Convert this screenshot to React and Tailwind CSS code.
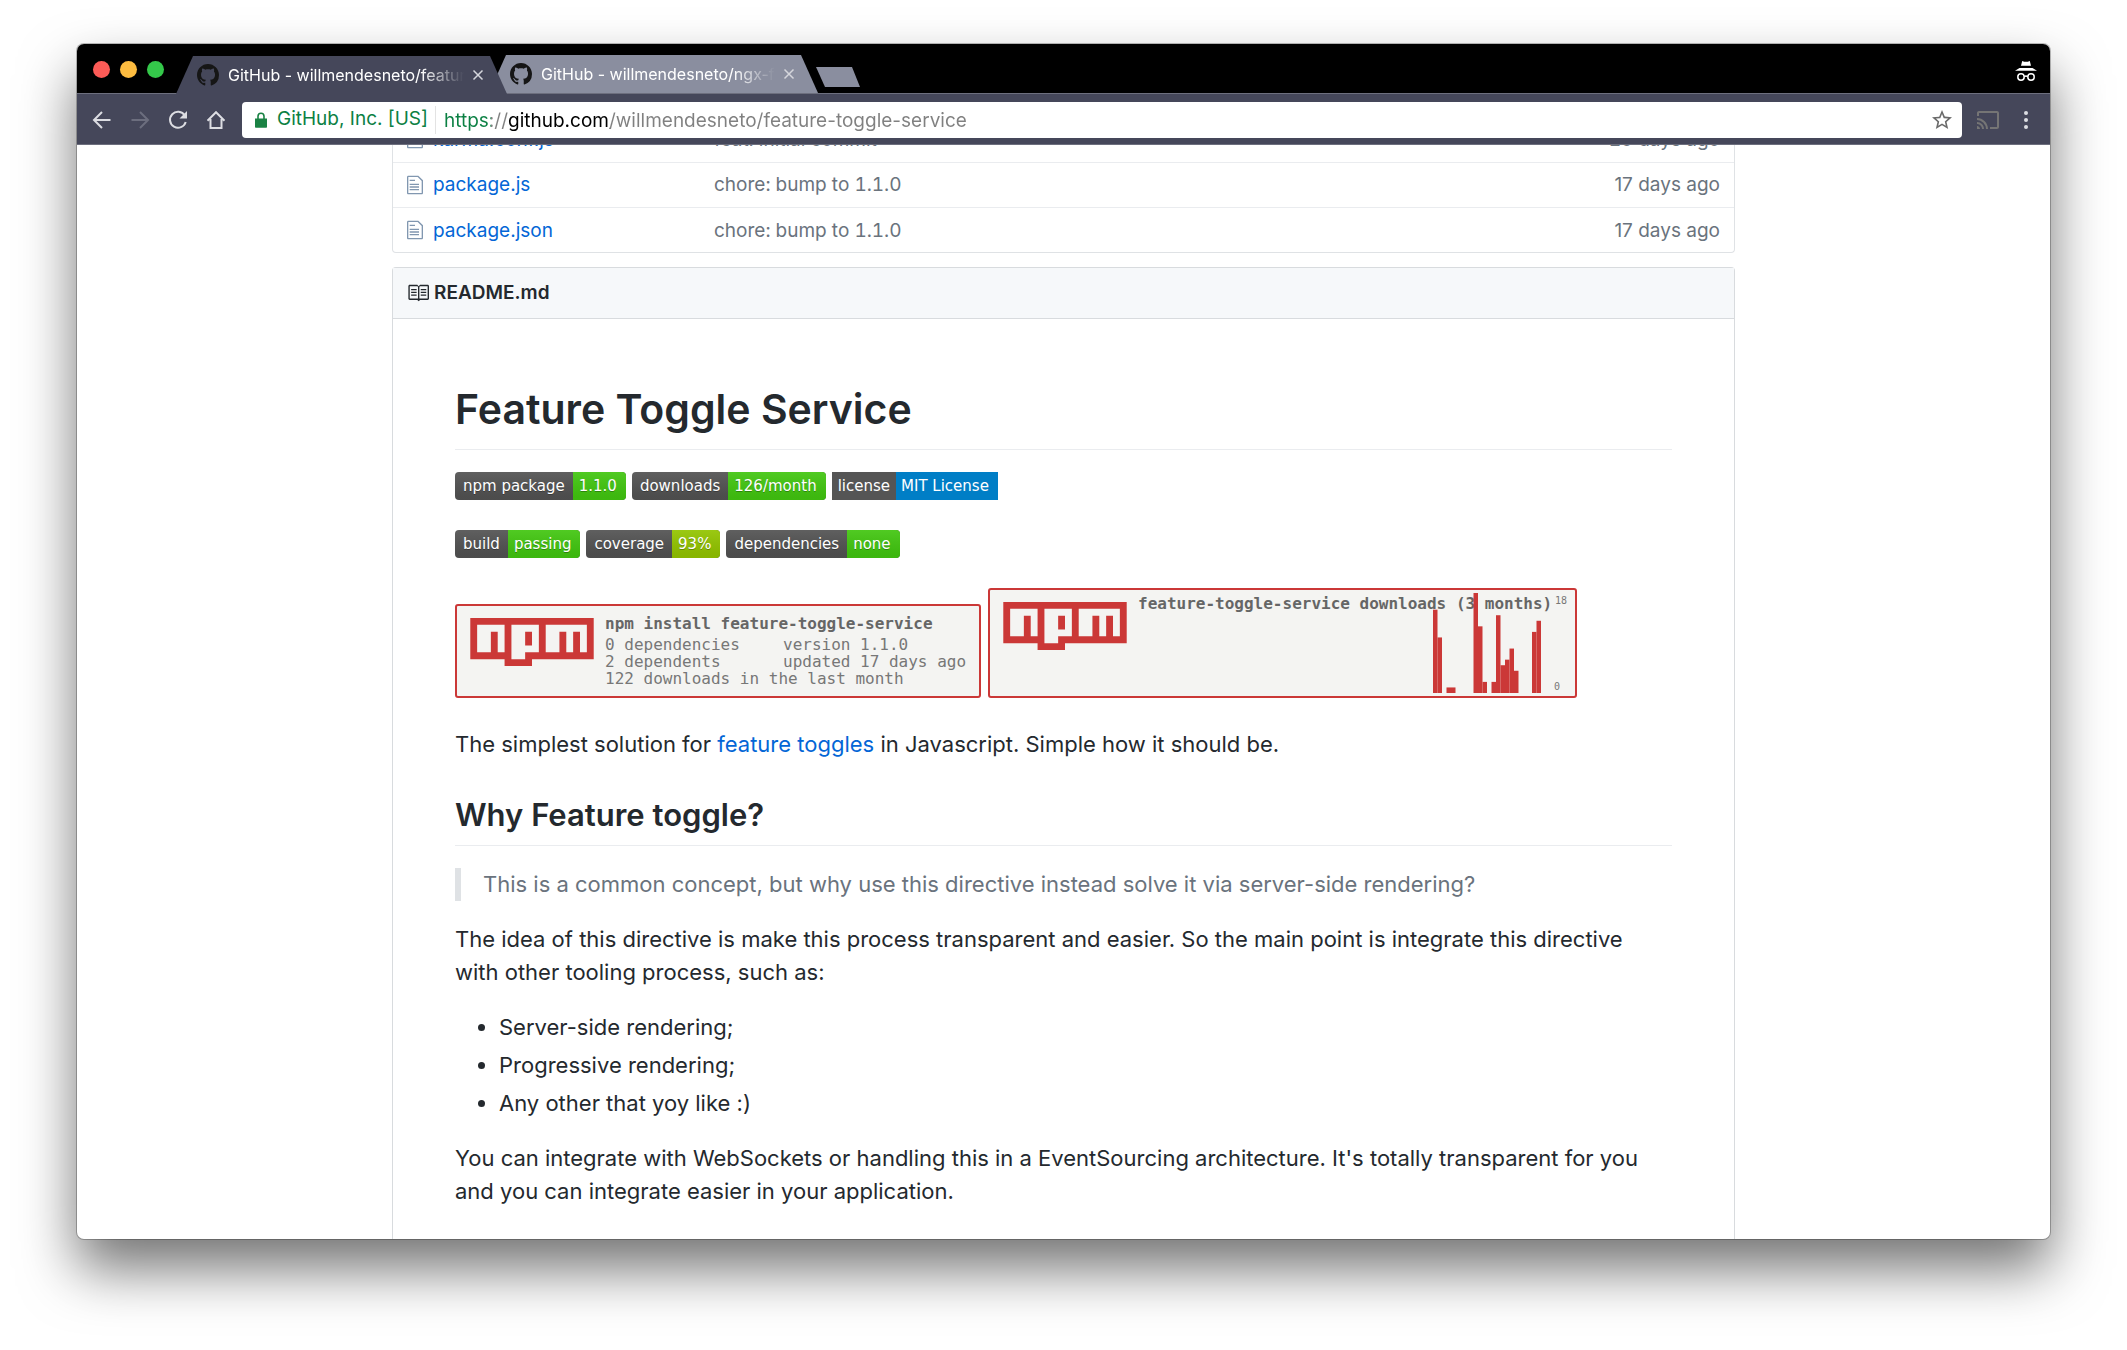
import React from "react";
import { MdCast, MdStarBorder } from "react-icons/md";

const MARK =
  "M8 0C3.58 0 0 3.58 0 8c0 3.54 2.29 6.53 5.47 7.59.4.07.55-.17.55-.38 0-.19-.01-.82-.01-1.49-2.01.37-2.53-.49-2.69-.94-.09-.23-.48-.94-.82-1.13-.28-.15-.68-.52-.01-.53.63-.01 1.08.58 1.23.82.72 1.21 1.87.87 2.33.66.07-.52.28-.87.51-1.07-1.78-.2-3.64-.89-3.64-3.95 0-.87.31-1.59.82-2.15-.08-.2-.36-1.02.08-2.12 0 0 .67-.21 2.2.82.64-.18 1.32-.27 2-.27.68 0 1.36.09 2 .27 1.53-1.04 2.2-.82 2.2-.82.44 1.1.16 1.92.08 2.12.51.56.82 1.27.82 2.15 0 3.07-1.87 3.75-3.65 3.95.29.25.54.73.54 1.48 0 1.07-.01 1.93-.01 2.2 0 .21.15.46.55.38A8.013 8.013 0 0 0 16 8c0-4.42-3.58-8-8-8z";
const FILE =
  "M6 5H2V4h4v1zM2 8h7V7H2v1zm0 2h7V9H2v1zm0 2h7v-1H2v1zm10-7.5V14c0 .55-.45 1-1 1H1c-.55 0-1-.45-1-1V2c0-.55.45-1 1-1h7.5L12 4.5zM11 5L8 2H1v12h10V5z";
const BOOK =
  "M3 5h4v1H3V5zm0 3h4V7H3v1zm0 2h4V9H3v1zm11-5h-4v1h4V5zm0 2h-4v1h4V7zm0 2h-4v1h4V9zm2-6v9c0 .55-.45 1-1 1H9.5l-1 1-1-1H2c-.55 0-1-.45-1-1V3c0-.55.45-1 1-1h5.5l1 1 1-1H15c.55 0 1 .45 1 1zm-8 .5L7.5 3H2v9h6V3.5zm7-.5H9.5l-.5.5V12h6V3z";

const tabShape =
  "[clip-path:polygon(17px_0,calc(100%-17px)_0,100%_100%,0_100%)]";

function Tab({ title, active }) {
  return (
    <div
      className={
        "flex h-[38px] items-center pl-[21px] pr-[23px] " +
        tabShape +
        (active
          ? " relative z-10 -mb-px w-[331px] bg-[#45475a]"
          : " -ml-[18px] w-[329px] bg-[#8a8e9f]")
      }
    >
      <button type="button" className="flex min-w-0 flex-1 items-center gap-[9px] text-left">
        <svg viewBox="0 0 16 16" className="size-[22px] shrink-0 fill-[#161616]" aria-hidden="true">
          <path d={MARK} />
        </svg>
        <span className="flex-1 overflow-hidden whitespace-nowrap text-base text-white [mask-image:linear-gradient(to_right,black_82%,transparent)]">
          {title}
        </span>
      </button>
      <button type="button" aria-label="Close tab" className="ml-2">
        <svg viewBox="0 0 12 12" className="size-3 stroke-[#d5d6dc]" fill="none" strokeWidth="1.5" aria-hidden="true">
          <path d="M1.5 1.5l9 9M10.5 1.5l-9 9" />
        </svg>
      </button>
    </div>
  );
}

function NavIcon({ label, dim, children }) {
  return (
    <button type="button" aria-label={label} className={dim ? "text-[#6c6e7e]" : "text-[#dcdde2]"}>
      <svg viewBox="0 0 20 20" className="size-5" fill="none" stroke="currentColor" strokeWidth="2" aria-hidden="true">
        {children}
      </svg>
    </button>
  );
}

function FileRow({ name, message, age }) {
  return (
    <tr className="h-[45px] border-t border-[#eaecef] first:border-t-0">
      <td className="w-10 pl-[14px]">
        <svg viewBox="0 0 12 16" className="h-[22px] w-4 fill-[#8197b0]" aria-hidden="true">
          <path d={FILE} />
        </svg>
      </td>
      <td className="w-[281px] pt-0.5">
        <a href={"#" + name} className="text-[#0366d6]">{name}</a>
      </td>
      <td className="pt-0.5 tabular-nums">{message}</td>
      <td className="pr-[14px] pt-0.5 text-right">{age}</td>
    </tr>
  );
}

const tones = {
  green: "bg-[#44cc11]",
  olive: "bg-[#97ca00]",
  blue: "bg-[#007ec6]",
};

function Badge({ label, value, tone = "green", flat }) {
  return (
    <a
      href={"#" + label}
      className={
        "flex h-7 items-center overflow-hidden whitespace-nowrap bg-[#555] text-[15px] leading-7 text-white [font-family:'DejaVu_Sans',Verdana,sans-serif] " +
        (flat ? "" : "rounded-[4px] [text-shadow:0_1px_0_#0101014d]")
      }
    >
      <span className={flat ? "h-7 px-[6px]" : "h-7 bg-linear-to-b from-[#bbbbbb1a] to-[#0000001a] px-2"}>{label}</span>
      <span className={tones[tone]}>
        <span className={flat ? "block h-7 pl-[5px] pr-[9px]" : "block h-7 bg-linear-to-b from-[#bbbbbb1a] to-[#0000001a] pl-[6px] pr-[9px]"}>
          {value}
        </span>
      </span>
    </a>
  );
}

function NpmLogo() {
  return (
    <svg viewBox="0 0 18 7" className="h-12 w-[124px] shrink-0" role="img" aria-label="npm">
      <path fill="#cb3837" d="M0 0h18v6H9v1H5V6H0z" />
      <path
        fill="#f4f4f2"
        fillRule="evenodd"
        d="M1 1v4h2V2h1v3h1V1zM6 1v5h2V5h2V1zM8 2h1v2H8zM11 1v4h2V2h1v3h1V2h1v3h1V1z"
      />
    </svg>
  );
}

const downloads = [15, 10, 0, 1, 1, 0, 0, 0, 0, 18, 12, 2, 0, 2, 14, 5, 6, 8, 4, 0, 0, 0, 11, 13];

const mono = "[font-family:'DejaVu_Sans_Mono','Liberation_Mono',monospace]";

export default function App() {
  return (
    <div className="min-h-screen bg-white px-[77px] pb-[110px] pt-11 text-[#24292e] [font-family:Inter,'Liberation_Sans',sans-serif]">
      <div className="overflow-hidden rounded-[7px] bg-white shadow-[0_0_0_1px_#00000040,0_30px_56px_#0000008c]">
        <header>
          <div className="flex h-[50px] items-end border-b border-[#6d6f7e] bg-black">
            <div className="flex gap-[10px] self-center pl-4 pr-3 pt-0.5">
              <button type="button" aria-label="Close window" className="size-[17px] rounded-full bg-[#fc5b57]" />
              <button type="button" aria-label="Minimize window" className="size-[17px] rounded-full bg-[#fdbc40]" />
              <button type="button" aria-label="Zoom window" className="size-[17px] rounded-full bg-[#34c84a]" />
            </div>
            <Tab title="GitHub - willmendesneto/feature-toggle-service" active />
            <Tab title="GitHub - willmendesneto/ngx-feature-toggle" />
            <button
              type="button"
              aria-label="New tab"
              className="-ml-0.5 mb-[6px] h-5 w-11 bg-[#8a8e9f] [clip-path:polygon(0_0,36px_0,100%_100%,9px_100%)]"
            />
            <svg viewBox="0 0 22 20" className="mb-3 ml-auto mr-[13px] h-5 w-[22px]" role="img" aria-label="Incognito">
              <path fill="#fff" d="M7.2 0l2 .7h3.6l2-.7 1.200 4.800H6zM4.500 7h13L22 9.800H0z" />
              <g fill="none" stroke="#fff" strokeWidth="1.500">
                <circle cx="6" cy="16" r="3.200" />
                <circle cx="16" cy="16" r="3.200" />
                <path d="M9.200 15.600q1.800-1 3.600 0" />
              </g>
            </svg>
          </div>
          <div className="flex h-[51px] items-center border-b border-[#6d6f7e] bg-[#45475a] pl-[15px] pr-[22px] pt-px">
            <div className="flex gap-[18px]">
              <NavIcon label="Back">
                <path d="M18.500 10H2M10 2L2 10l8 8" />
              </NavIcon>
              <NavIcon label="Forward" dim>
                <path d="M1.500 10H18M10 2l8 8-8 8" />
              </NavIcon>
              <NavIcon label="Reload">
                <path d="M16.800 5.500A8 8 0 1 0 17.700 12" />
                <path d="M19 1v7.500h-7.500z" fill="currentColor" stroke="none" />
              </NavIcon>
              <NavIcon label="Home">
                <path d="M1.500 10.800L10 2.200l8.500 8.600M4.500 9v9h11V9" />
              </NavIcon>
            </div>
            <form className="ml-4 flex h-9 min-w-0 flex-1 items-center rounded-[4px] bg-white pl-[13px] pr-2 text-[19px]">
              <button type="button" className="flex shrink-0 items-center gap-[10px] whitespace-nowrap text-[#0b8043]">
                <svg viewBox="0 0 12 16" className="h-4 w-3" aria-hidden="true">
                  <path fill="#1a8244" d="M0 6.500h12V15q0 .8-.8.8H.8Q0 15.800 0 15z" />
                  <path fill="none" stroke="#1a8244" strokeWidth="1.600" d="M3 7V4.200a3 3 0 0 1 6 0V7" />
                </svg>
                GitHub, Inc. [US]
              </button>
              <span className="ml-[7px] h-7 w-px shrink-0 bg-[#e3e3e3]" />
              <input
                type="text"
                aria-label="Address"
                defaultValue="https://github.com/willmendesneto/feature-toggle-service"
                className="ml-2 h-9 min-w-0 flex-1 bg-[linear-gradient(to_right,#0b8043_47px,#808080_47px,#808080_65px,#000_65px,#000_166px,#808080_166px)] bg-clip-text pt-0.5 text-transparent outline-none"
              />
              <button type="button" aria-label="Bookmark this page" className="text-[#6b6b6b]">
                <MdStarBorder className="size-6" />
              </button>
            </form>
            <button type="button" aria-label="Cast" className="ml-[14px] text-[#757575]">
              <MdCast className="size-6" />
            </button>
            <button type="button" aria-label="Menu" className="ml-6 flex flex-col gap-[3px]">
              <span className="size-1 rounded-full bg-[#dcdde2]" />
              <span className="size-1 rounded-full bg-[#dcdde2]" />
              <span className="size-1 rounded-full bg-[#dcdde2]" />
            </button>
          </div>
        </header>

        <main className="overflow-hidden">
          <div className="mx-auto w-full max-w-[1343px]">
            <div className="-mt-7 rounded-b-[4px] border border-t-0 border-[#dfe2e5]">
              <table className="w-full border-collapse text-[19px] text-[#6a737d]">
                <tbody>
                  <FileRow name="karma.conf.js" message="feat: initial commit" age="20 days ago" />
                  <FileRow name="package.js" message="chore: bump to 1.1.0" age="17 days ago" />
                  <FileRow name="package.json" message="chore: bump to 1.1.0" age="17 days ago" />
                </tbody>
              </table>
            </div>

            <section className="mt-[14px] rounded-t-[4px] border border-b-0 border-[#d8dbde]">
              <h3 className="flex h-[51px] items-center gap-[5px] border-b border-[#d8dbde] bg-[#f6f8fa] pl-[14px] text-[19px] font-semibold">
                <svg viewBox="0 0 16 16" className="size-[22px] fill-[#24292e]" aria-hidden="true">
                  <path d={BOOK} />
                </svg>
                README.md
              </h3>

              <article className="px-[62px] pb-[31px] pt-[63px] text-[22px] leading-[33px]">
                <h1 className="mb-[22px] border-b border-[#eaecef] pb-3 text-[41px] font-semibold leading-[55px]">
                  Feature Toggle Service
                </h1>
                <div className="mb-[30px] flex gap-[6px]">
                  <Badge label="npm package" value="1.1.0" />
                  <Badge label="downloads" value="126/month" />
                  <Badge label="license" value="MIT License" tone="blue" flat />
                </div>
                <div className="mb-[30px] flex gap-[6px]">
                  <Badge label="build" value="passing" />
                  <Badge label="coverage" value="93%" tone="olive" />
                  <Badge label="dependencies" value="none" />
                </div>

                <div className={"mb-[30px] flex items-end gap-[7px] whitespace-pre text-base text-[#777] " + mono}>
                  <a href="#npm" className="flex h-[94px] w-[526px] gap-[11px] rounded-[3px] border-2 border-[#cb3837] bg-[#f4f4f2] pl-[13px]">
                    <span className="pt-3"><NpmLogo /></span>
                    <span className="flex flex-col pt-2 leading-[17px]">
                      <b className="mb-0.5 leading-5 text-[#666]">npm install feature-toggle-service</b>
                      <span className="grid grid-cols-[178px_auto]">
                        <span>0 dependencies</span>
                        <span>version 1.1.0</span>
                        <span>2 dependents</span>
                        <span>updated 17 days ago</span>
                      </span>
                      <span>122 downloads in the last month</span>
                    </span>
                  </a>
                  <a href="#downloads" className="relative flex h-[110px] w-[589px] gap-[11px] rounded-[3px] border-2 border-[#cb3837] bg-[#f4f4f2] pl-[13px]">
                    <span className="pt-3"><NpmLogo /></span>
                    <b className="pt-1 leading-5 text-[#666]">feature-toggle-service downloads (3 months)</b>
                    <svg
                      viewBox="0 0 24 18"
                      preserveAspectRatio="none"
                      className="absolute bottom-[3px] right-[34px] h-[100px] w-[108px] fill-[#cb3837]"
                      role="img"
                      aria-label="Daily downloads"
                    >
                      {downloads.map((n, i) => (
                        <rect key={i} x={i} y={18 - n} width="1" height={n} />
                      ))}
                    </svg>
                    <span className="absolute right-2 top-[5px] text-[10px] leading-3">18</span>
                    <span className="absolute bottom-[3px] right-[15px] text-[10px] leading-3">0</span>
                  </a>
                </div>

                <p>
                  The simplest solution for{" "}
                  <a href="#toggles" className="text-[#0366d6]">feature toggles</a> in Javascript. Simple how it should be.
                </p>
                <h2 className="mb-[22px] mt-[33px] border-b border-[#eaecef] pb-[10px] text-[31px] font-semibold leading-[41px]">
                  Why Feature toggle?
                </h2>
                <blockquote className="mb-[22px] border-l-[6px] border-[#dfe2e5] pl-[22px] text-[#6a737d]">
                  This is a common concept, but why use this directive instead solve it via server-side rendering?
                </blockquote>
                <p className="mb-[22px]">
                  The idea of this directive is make this process transparent and easier. So the main point is integrate
                  this directive with other tooling process, such as:
                </p>
                <ul className="mb-[22px] flex list-disc flex-col gap-[5px] pl-11">
                  <li>Server-side rendering;</li>
                  <li>Progressive rendering;</li>
                  <li>Any other that yoy like :)</li>
                </ul>
                <p>
                  You can integrate with WebSockets or handling this in a EventSourcing architecture. It's totally
                  transparent for you and you can integrate easier in your application.
                </p>
              </article>
            </section>
          </div>
        </main>
      </div>
    </div>
  );
}
